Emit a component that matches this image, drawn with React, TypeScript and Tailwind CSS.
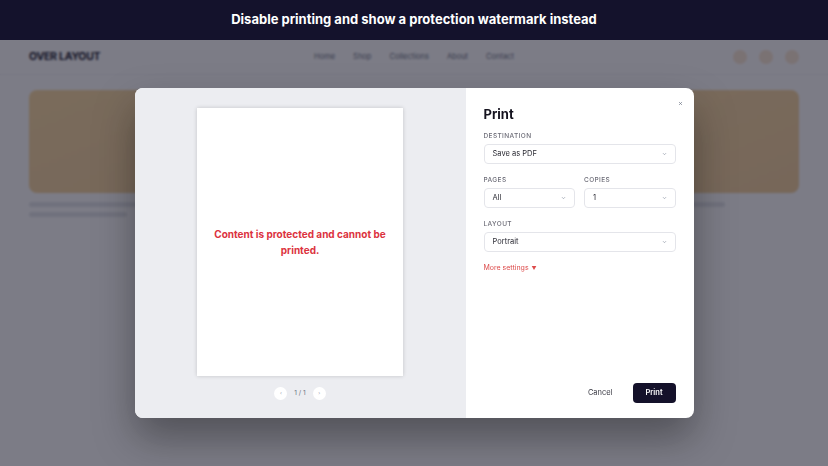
import { X } from "lucide-react";

const navLinks = ["Home", "Shop", "Collections", "About", "Contact"];

const Chevron = () => (
  <svg width="5" height="4" viewBox="0 0 5 4" className="text-gray-400">
    <path d="M1 1.2 L2.5 2.7 L4 1.2" fill="none" stroke="currentColor" strokeWidth="0.8" />
  </svg>
);

const Field = ({ label, value, className = "" }: { label: string; value: string; className?: string }) => (
  <div className={className}>
    <div className="text-[6.5px] leading-[8px] font-medium tracking-[0.06em] text-[#6b6b76]">{label}</div>
    <div className="mt-[4px] flex h-[20px] items-center justify-between rounded-[4px] border border-[#e4e5ea] pl-[8px] pr-[8px]">
      <span className="text-[7.5px] text-[#2a2a33]">{value}</span>
      <Chevron />
    </div>
  </div>
);

export default function App() {
  return (
    <div className="h-[466px] w-[828px] overflow-hidden bg-white font-['Inter',sans-serif]">
      {/* Banner */}
      <div className="flex h-10 items-center justify-center bg-[#14122c]">
        <h1 className="text-[13px] font-bold text-white">
          Disable printing and show a protection watermark instead
        </h1>
      </div>

      {/* Page behind the dialog */}
      <div className="relative h-[426px]">
        <header className="flex h-[35px] items-center border-b border-gray-100 px-[29px]">
          <div className="flex-1 text-[10.5px] font-bold tracking-tight text-[#1a1a2e]">OVER LAYOUT</div>
          <nav className="flex gap-[18px] text-[7.5px] text-gray-500">
            {navLinks.map((link) => (
              <span key={link}>{link}</span>
            ))}
          </nav>
          <div className="flex flex-1 justify-end gap-[12px]">
            <span className="h-[14px] w-[14px] rounded-full bg-[#fbe8d4]" />
            <span className="h-[14px] w-[14px] rounded-full bg-[#fbe8d4]" />
            <span className="h-[14px] w-[14px] rounded-full bg-[#fbe8d4]" />
          </div>
        </header>

        <div className="grid grid-cols-3 gap-4 px-[29px] pt-[15px]">
          {[0, 1, 2].map((i) => (
            <div key={i}>
              <div className="h-[103px] rounded-lg bg-gradient-to-br from-[#fbdba2] to-[#f3d09c]" />
              <div className="mt-[9px] h-[5px] w-[70%] rounded-full bg-gray-200" />
              <div className="mt-[5px] h-[5px] w-[40%] rounded-full bg-gray-200" />
            </div>
          ))}
        </div>

        {/* Overlay + dialog */}
        <div className="absolute inset-0 flex items-center justify-center bg-[#111122]/55 backdrop-blur-[1px]">
          <div className="flex h-[330px] w-[559px] overflow-hidden rounded-lg bg-white shadow-[0_20px_40px_rgba(0,0,0,0.35)]">
            {/* Preview */}
            <div className="flex w-[331px] flex-col items-center bg-[#ecedf1]">
              <div className="mt-[20px] flex h-[268px] w-[206px] items-center justify-center bg-white px-[8px] shadow-[0_0_4px_rgba(0,0,0,0.18)]">
                <p className="text-center text-[10px] font-bold leading-[16px] text-[#dc3240]">
                  Content is protected and cannot be printed.
                </p>
              </div>
              <div className="mt-[11px] flex items-center gap-[7px]">
                <span className="flex h-[13px] w-[13px] items-center justify-center rounded-full bg-white text-[5px] text-gray-400">‹</span>
                <span className="text-[6.5px] text-gray-500">1 / 1</span>
                <span className="flex h-[13px] w-[13px] items-center justify-center rounded-full bg-white text-[5px] text-gray-400">›</span>
              </div>
            </div>

            {/* Settings */}
            <div className="relative flex flex-1 flex-col px-[18px] pt-[18px] pb-[15px]">
              <X className="absolute right-[11px] top-[13px] h-[5px] w-[5px] text-gray-500" strokeWidth={3} />
              <h2 className="text-[13px] font-bold leading-[16px] text-[#15131f]">Print</h2>
              <Field label="DESTINATION" value="Save as PDF" className="mt-[10px]" />
              <div className="mt-[12px] grid grid-cols-2 gap-[9px]">
                <Field label="PAGES" value="All" />
                <Field label="COPIES" value="1" />
              </div>
              <Field label="LAYOUT" value="Portrait" className="mt-[12px]" />
              <div className="mt-[11px] flex items-center gap-[3px] text-[7px] leading-[10px] text-[#dd4b4b]">
                More settings <span className="text-[5px]">▼</span>
              </div>
              <div className="flex-1" />
              <div className="flex items-center justify-end gap-[20px]">
                <span className="text-[7.5px] text-[#3a3a44]">Cancel</span>
                <button className="h-[20px] w-[43px] rounded-[4px] bg-[#14112a] text-[7.5px] font-semibold text-white">
                  Print
                </button>
              </div>
            </div>
          </div>
        </div>
      </div>
    </div>
  );
}
